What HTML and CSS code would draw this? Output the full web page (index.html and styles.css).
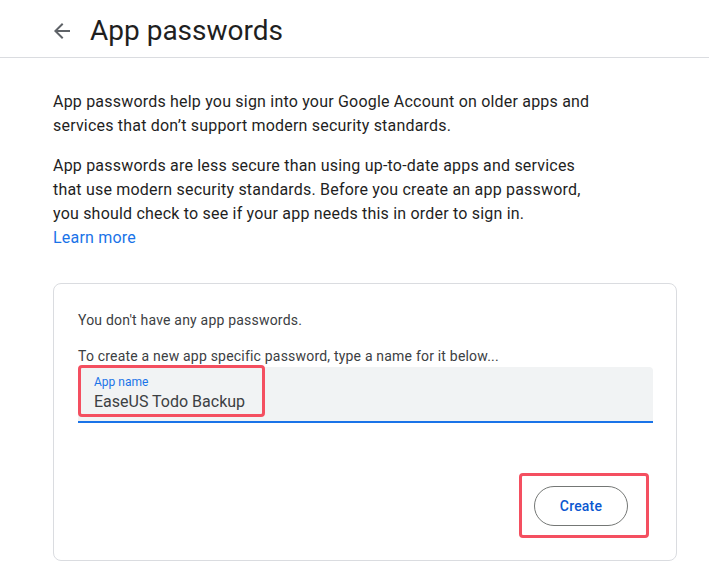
FILE: index.html
```html
<!DOCTYPE html>
<html lang="en">
<head>
<meta charset="utf-8">
<title>App passwords</title>
<link rel="stylesheet" href="styles.css">
</head>
<body>
<header class="topbar">
  <span class="back" aria-label="Back">
    <svg viewBox="0 0 24 24" width="24" height="24"><path d="M20 11H7.83l5.59-5.59L12 4l-8 8 8 8 1.41-1.41L7.83 13H20v-2z" fill="#5f6368"/></svg>
  </span>
  <h1 class="title">App passwords</h1>
</header>
<main class="content">
  <p class="para">App passwords help you sign into your Google Account on older apps and services that don’t support modern security standards.</p>
  <p class="para">App passwords are less secure than using up-to-date apps and services that use modern security standards. Before you create an app password, you should check to see if your app needs this in order to sign in.<br><a class="link" href="#">Learn more</a></p>
  <section class="card">
    <p class="note">You don't have any app passwords.</p>
    <p class="note second">To create a new app specific password, type a name for it below...</p>
    <div class="field">
      <span class="field-label">App name</span>
      <span class="field-value">EaseUS Todo Backup</span>
      <span class="mark mark-field"></span>
    </div>
    <div class="actions">
      <div class="btn-wrap">
        <button class="btn" type="button">Create</button>
        <span class="mark mark-btn"></span>
      </div>
    </div>
  </section>
</main>
</body>
</html>
```
FILE: styles.css
```css
* { box-sizing: border-box; }
html, body { margin: 0; padding: 0; background: #fff; }
body { font-family: Roboto, "Noto Sans", Arial, sans-serif; color: #1f1f1f; }

.topbar {
  height: 58px;
  border-bottom: 1px solid #dadce0;
  display: flex;
  align-items: center;
  padding-left: 50px;
  padding-top: 5px;
}
.back { width: 24px; height: 24px; display: flex; }
.title {
  margin: 0 0 0 16px;
  font-family: Roboto, "Open Sans", sans-serif;
  font-size: 28px;
  font-weight: 400;
  color: #1f1f1f;
  line-height: 36px;
}

.content { padding: 32px 0 0 53px; width: 677px; }
.para {
  margin: 0 0 16px;
  max-width: 545px;
  font-size: 16px;
  line-height: 24px;
  letter-spacing: 0.2px;
  color: #1f1f1f;
}
.link { color: #1a73e8; text-decoration: none; }

.card {
  margin-top: 33px;
  border: 1px solid #dadce0;
  border-radius: 8px;
  padding: 26px 23px 34px 24px;
}
.note {
  margin: 0;
  font-size: 14px;
  line-height: 20px;
  letter-spacing: 0.2px;
  color: #3c4043;
}
.note.second { margin-top: 16px; }

.field {
  position: relative;
  margin-top: 1px;
  height: 56px;
  background: #f1f3f4;
  border-radius: 4px 4px 0 0;
  border-bottom: 2px solid #1a73e8;
  padding: 8px 16px 0;
  display: flex;
  flex-direction: column;
}
.field-label { font-size: 12px; line-height: 14px; color: #1a73e8; }
.field-value { font-size: 16px; line-height: 24px; color: #3c4043; margin-top: 1px; }

.mark {
  position: absolute;
  border: 3px solid #f44f60;
  border-radius: 4px;
  pointer-events: none;
}
.mark-field { left: 0; top: -2px; width: 187px; height: 52px; }

.actions {
  display: flex;
  justify-content: flex-end;
  margin-top: 63px;
  padding-right: 25px;
}
.btn-wrap { position: relative; }
.btn {
  width: 94px;
  height: 40px;
  border: 1px solid #747775;
  border-radius: 20px;
  background: #fff;
  color: #0b57d0;
  font-family: Roboto, "Open Sans", sans-serif;
  font-size: 14px;
  font-weight: 500;
  letter-spacing: 0.2px;
  cursor: pointer;
}
.mark-btn { left: -15px; top: -13px; width: 130px; height: 65px; }
```
